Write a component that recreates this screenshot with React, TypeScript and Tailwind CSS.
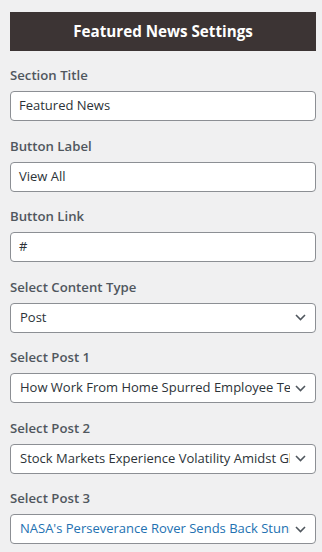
import { ReactNode } from 'react';

const font = { fontFamily: '"Open Sans", "Noto Sans", sans-serif' };

const Chevron = () => (
    <svg width="11" height="7" viewBox="0 0 11 7" className="shrink-0">
        <path d="M1 1 L5.5 5.5 L10 1" fill="none" stroke="#50575e" strokeWidth="1.6" />
    </svg>
);

const Field = ({ label, children }: { label: string; children: ReactNode }) => (
    <div className="flex flex-col">
        <label className="text-[13.2px] font-semibold text-[#50575e] leading-[20px] h-[20px] mb-[6px]">{label}</label>
        {children}
    </div>
);

const TextInput = ({ value }: { value: string }) => (
    <div className="h-[30px] bg-white border border-[#8c8f94] rounded-[4px] px-[8px] flex items-center text-[13px] text-[#2c3338]">
        {value}
    </div>
);

const Select = ({ value, blue }: { value: string; blue?: boolean }) => (
    <div className="h-[30px] bg-white border border-[#8c8f94] rounded-[4px] pl-[9px] pr-[9px] flex items-center gap-[5px]">
        <span className={`flex-1 overflow-hidden whitespace-nowrap text-[13px] ${blue ? 'text-[#2271b1]' : 'text-[#2c3338]'}`}>{value}</span>
        <Chevron />
    </div>
);

export default function App() {
    return (
        <div className="w-[322px] h-[552px] bg-[#f0f0f1] pl-[10px] pr-[6px] pt-[12px] overflow-hidden" style={font}>
            <div className="h-[39px] bg-[#3c3434] flex items-center justify-center text-white text-[15.2px] font-bold">
                Featured News Settings
            </div>
            <div className="flex flex-col gap-[14.5px] mt-[14px]">
                <Field label="Section Title"><TextInput value="Featured News" /></Field>
                <Field label="Button Label"><TextInput value="View All" /></Field>
                <Field label="Button Link"><TextInput value="#" /></Field>
                <Field label="Select Content Type"><Select value="Post" /></Field>
                <Field label="Select Post 1"><Select value="How Work From Home Spurred Employee Tension" /></Field>
                <Field label="Select Post 2"><Select value="Stock Markets Experience Volatility Amidst Global Uncertainty" /></Field>
                <Field label="Select Post 3"><Select value="NASA's Perseverance Rover Sends Back Stunning Images" blue /></Field>
            </div>
        </div>
    );
}
